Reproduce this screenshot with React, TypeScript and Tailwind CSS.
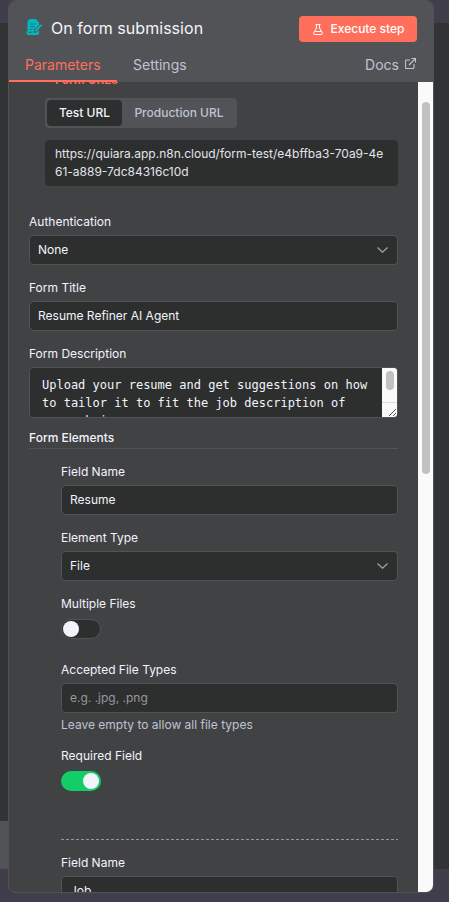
import React from "react";

const field = "flex items-center rounded-[4px] border border-[#525356] bg-[#2d2e2e] px-2 h-[30px] text-[12px] leading-none text-[#f2f4fc]";

function Label({ children }: { children: React.ReactNode }) {
  return <div className="h-[18px] text-[12px] leading-[18px] text-[#f2f4fc]">{children}</div>;
}

function Field({ label, value, select, placeholder }: { label: string; value: string; select?: boolean; placeholder?: boolean }) {
  return (
    <div className="flex flex-col gap-[4px]">
      <Label>{label}</Label>
      <div className={field}>
        <span className={placeholder ? "flex-1 text-[#96999f]" : "flex-1"}>{value}</span>
        {select && (
          <svg className="mr-px h-[6px] w-[11px]" viewBox="0 0 11 6" fill="none" stroke="#a0a2a8" strokeWidth="1.2">
            <path d="M.5 .5 5.5 5.3 10.5 .5" />
          </svg>
        )}
      </div>
    </div>
  );
}

function Toggle({ on }: { on?: boolean }) {
  return on ? (
    <div className="flex h-5 w-10 items-center justify-end rounded-full bg-[#13ce66] px-[2px]">
      <div className="size-4 rounded-full bg-[#f2f4fc]" />
    </div>
  ) : (
    <div className="flex h-5 w-10 items-center rounded-full border border-[#525356] bg-[#2d2e2e] px-px">
      <div className="size-4 rounded-full bg-[#f2f4fc]" />
    </div>
  );
}

function FormIcon() {
  return (
    <svg className="-mt-[3px] h-4 w-[17px]" viewBox="0 0 17 16">
      <path d="M4 0H9.7L13 3.3V6.2L8.2 10.6 7.6 13.4H10L13 11V14Q13 16 11 16H2.5Q.5 16 .5 14V12.5H1.5V2L4 0Z" fill="#00b8bd" />
      <path d="M4 5H9.5M4 7.8H8.5M4 10.5H6.5M2.3 13.3H6" stroke="#3d6165" strokeWidth=".9" />
      <path d="M8 13.2 8.5 11 14.2 5.2Q15 4.5 16 5.4T16 7L10.3 12.7Z" fill="#00b8bd" stroke="#525356" strokeWidth=".7" />
    </svg>
  );
}

export default function App() {
  return (
    <div className="flex h-[902px] w-[449px] flex-col bg-[#403e4b] font-['Inter',sans-serif]">
      <div className="grid h-[902px] grid-cols-[8px_426px_15px]">
        <div className="flex flex-col pt-[23px]">
          <div className="h-[798px] bg-[#323335]" />
          <div className="h-12 bg-[#525356]" />
        </div>
        <div className="flex h-[893px] flex-col overflow-hidden rounded-[8px] border border-[#525356] bg-[#414244]">
          <header className="flex h-[81px] shrink-0 flex-col bg-[#525356]">
            <div className="flex h-[55px] items-center pl-[17px] pr-4 text-[#f2f4fc]">
              <FormIcon />
              <h1 className="-mt-[2px] ml-2 flex-1 text-[16px] tracking-[0.04px]">On form submission</h1>
              <button className="flex h-[26px] w-[118px] items-center justify-center gap-2 rounded-[4px] bg-[#ff6f5c] pl-px text-[12px] font-medium text-white">
                <svg className="mt-px h-[11px] w-[10px]" viewBox="0 0 10 11" fill="none" stroke="currentColor">
                  <path d="M2.5 .5H7.5M3.5 .5V4L.8 8.8Q.2 10.5 1.7 10.5H8.3Q9.8 10.5 9.2 8.8L6.5 4V.5M2 7.5H8" />
                </svg>
                Execute step
              </button>
            </div>
            <nav className="flex h-[26px] text-[14px] leading-[18px] text-[#bec3d4]">
              <div className="h-[26px] w-[108px] border-b-2 border-[#ff6f5c] pl-4 text-[#ff6f5c]">Parameters</div>
              <div className="ml-4 flex-1">Settings</div>
              <div className="flex gap-[6px] pr-[17px]">
                Docs
                <svg className="mt-[2px] h-[11px] w-[11px]" viewBox="0 0 11 11" fill="none" stroke="currentColor" strokeWidth="1.1">
                  <path d="M5 2H1.5Q.5 2 .5 3V9.5Q.5 10.5 1.5 10.5H8Q9 10.5 9 9.5V6M6.5 .5H10.5V4.5M10.5 .5 4 7" />
                </svg>
              </div>
            </nav>
          </header>
          <div className="flex h-[810px]">
            <main className="flex w-[409px] flex-col overflow-hidden pl-5 pr-5">
              <div className="-mt-[11px] ml-[26px] h-[18px] text-[12px] font-semibold leading-[18px] text-[#ff6f5c]">Form URLs</div>
              <div className="ml-4 mt-[9px] flex h-[30px] w-[192px] items-center rounded-[4px] bg-[#525356] p-[2px] text-[12px] font-medium">
                <div className="flex h-[26px] w-[75px] items-center justify-center rounded-[4px] bg-[#2d2e2e] text-[#f2f4fc]">Test URL</div>
                <div className="flex-1 pl-px text-center text-[#bec3d4]">Production URL</div>
              </div>
              <div className="ml-4 mt-3 h-[46px] shrink-0 whitespace-nowrap rounded-[4px] bg-[#2d2e2e] px-[10px] py-[5px] text-[12px] leading-[18px] text-[#e2e4ec]">
                https://quiara.app.n8n.cloud/form-test/e4bffba3-70a9-4e<br />61-a889-7dc84316c10d
              </div>
              <div className="mt-[27px] flex flex-col gap-[14px]">
                <Field label="Authentication" value="None" select />
                <Field label="Form Title" value="Resume Refiner AI Agent" />
                <div className="flex flex-col gap-[4px]">
                  <Label>Form Description</Label>
                  <div className="flex h-[51px] overflow-hidden rounded-[4px] border border-[#525356] bg-[#2d2e2e]">
                    <div className="flex-1 whitespace-nowrap pl-3 pt-2 font-['DejaVu_Sans_Mono',monospace] text-[12px] leading-[18px] text-[#f2f4fc]">
                      Upload your resume and get suggestions on how<br />to tailor it to fit the job description of<br />your choice.
                    </div>
                    <div className="flex w-[15px] shrink-0 flex-col items-center bg-[#fafafa] pt-[3px]">
                      <div className="h-[19px] w-2 rounded-full bg-[#c1c1c1]" />
                      <svg className="mt-3 h-[15px] w-[15px] shrink-0" viewBox="0 0 15 15" stroke="#555">
                        <path d="M0 .5H15" stroke="#ddd" />
                        <path d="M7 14 14 7M11 14 14 11" />
                      </svg>
                    </div>
                  </div>
                </div>
              </div>
              <div className="mt-[11px] h-[20px] shrink-0 border-b border-[#525356] text-[12px] font-medium leading-[18px] text-[#f2f4fc]">Form Elements</div>
              <div className="ml-8 mt-[14px] flex flex-col">
                <div className="flex flex-col gap-[14px]">
                  <Field label="Field Name" value="Resume" />
                  <Field label="Element Type" value="File" select />
                </div>
                <div className="mt-[14px] flex flex-col gap-[6px]">
                  <Label>Multiple Files</Label>
                  <Toggle />
                </div>
                <div className="mt-[22px]"><Field label="Accepted File Types" value="e.g. .jpg, .png" placeholder /></div>
                <div className="mt-[3px] text-[12px] leading-[18px] text-[#bec3d4]">Leave empty to allow all file types</div>
                <div className="mt-[13px] flex flex-col gap-[6px]">
                  <Label>Required Field</Label>
                  <Toggle on />
                </div>
                <div className="mt-12 h-px shrink-0 bg-[repeating-linear-gradient(90deg,#96979a_0_3px,transparent_3px_5px)]" />
                <div className="mt-[14px]"><Field label="Field Name" value="Job" /></div>
              </div>
            </main>
            <div className="flex w-[15px] justify-center bg-[#fafafa] pt-5">
              <div className="h-[372px] w-2 rounded-full bg-[#c1c1c1]" />
            </div>
          </div>
        </div>
        <div className="pt-[23px]">
          <div className="h-[846px] bg-[#323335]" />
        </div>
      </div>
    </div>
  );
}
